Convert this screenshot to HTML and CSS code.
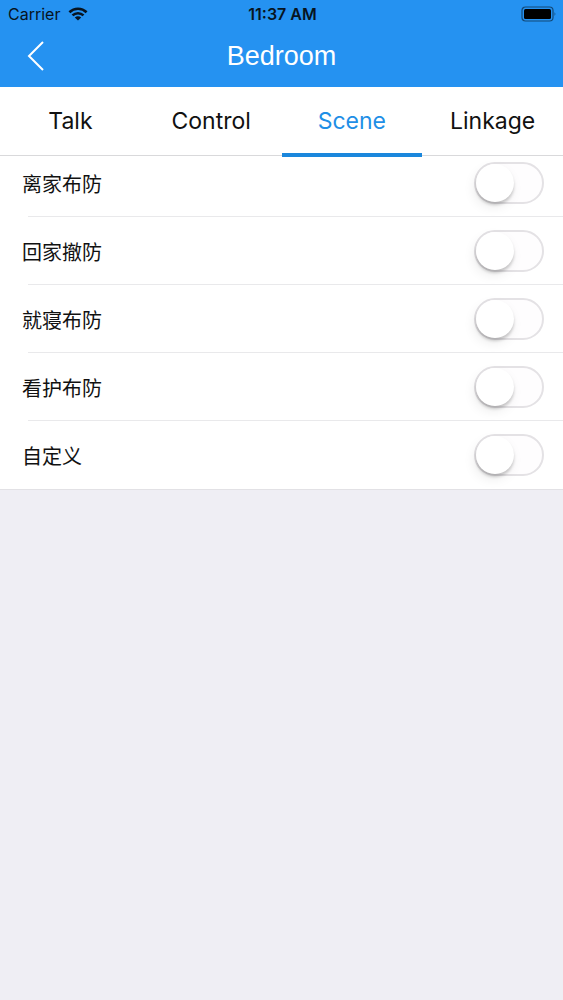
FILE: index.html
```
<!DOCTYPE html>
<html lang="zh-CN">
<head>
<meta charset="utf-8">
<meta name="viewport" content="width=device-width, initial-scale=1">
<title>Bedroom</title>
<link rel="stylesheet" href="styles.css">
</head>
<body>
<header class="header">
  <div class="status">
    <div class="carrier">
      <span>Carrier</span>
      <svg class="wifi" viewBox="0 0 20 14" aria-hidden="true">
        <path d="M1.4 5.2a12.4 12.4 0 0 1 17.2 0M4.5 8.4a8 8 0 0 1 11 0" fill="none" stroke="currentColor" stroke-width="2.6"/>
        <path d="M10 13.6 6.8 10.6a4.8 4.8 0 0 1 6.4 0z" fill="currentColor"/>
      </svg>
    </div>
    <time class="clock">11:37 AM</time>
    <svg class="battery" viewBox="0 0 36 16" aria-hidden="true">
      <rect x="1" y="1" width="31" height="14" rx="3.5" fill="none" stroke="currentColor" stroke-opacity=".5" stroke-width="1.2"/>
      <rect x="3" y="3" width="27" height="10" rx="1.5" fill="currentColor"/>
      <path d="M33.6 6q1.6 2 0 4z" fill="currentColor" fill-opacity=".6"/>
    </svg>
  </div>
  <div class="nav">
    <button class="back" type="button" aria-label="Back">
      <svg class="chevron" viewBox="0 0 18 30" aria-hidden="true"><path d="M16 1 2 15 16 29" fill="none" stroke="currentColor" stroke-width="2"/></svg>
    </button>
    <h1 class="title">Bedroom</h1>
  </div>
</header>
<nav class="tabs">
  <button class="tab" type="button">Talk</button>
  <button class="tab" type="button">Control</button>
  <button class="tab tab-active" type="button" aria-current="page">Scene</button>
  <button class="tab" type="button">Linkage</button>
</nav>
<main class="list">
  <div class="row"><label class="label" for="away">离家布防</label><input class="switch" id="away" type="checkbox" role="switch"></div>
  <div class="row"><label class="label" for="home">回家撤防</label><input class="switch" id="home" type="checkbox" role="switch"></div>
  <div class="row"><label class="label" for="sleep">就寝布防</label><input class="switch" id="sleep" type="checkbox" role="switch"></div>
  <div class="row"><label class="label" for="care">看护布防</label><input class="switch" id="care" type="checkbox" role="switch"></div>
  <div class="row"><label class="label" for="custom">自定义</label><input class="switch" id="custom" type="checkbox" role="switch"></div>
</main>
</body>
</html>
```
FILE: styles.css
```
* {
  box-sizing: border-box;
}

body {
  margin: 0;
  background: #efeef4;
  color: #111;
  font-family: Inter, "Noto Sans CJK SC", sans-serif;
}

button {
  margin: 0;
  padding: 0;
  border: 0;
  background: none;
  color: inherit;
  font: inherit;
}

.header {
  background: #2592f1;
}

.status {
  display: grid;
  grid-template-columns: 1fr auto 1fr;
  align-items: center;
  height: 28px;
  padding: 0 6px 0 8px;
  color: #071421;
  font-size: 16px;
}

.carrier {
  display: flex;
  align-items: center;
  gap: 8px;
}

.wifi {
  width: 20px;
  height: 14px;
}

.clock {
  font-weight: 600;
}

.battery {
  justify-self: end;
  width: 36px;
  height: 16px;
  color: #000;
}

.nav {
  display: grid;
  grid-template-columns: 1fr auto 1fr;
  align-items: center;
  height: 59px;
  padding-bottom: 4px;
  color: #fff;
}

.back {
  display: flex;
  justify-self: start;
  padding: 0 27px;
}

.chevron {
  width: 18px;
  height: 30px;
}

.title {
  margin: 0;
  font: 400 27px/32px "Liberation Sans", sans-serif;
}

.tabs {
  position: relative;
  display: grid;
  grid-template-columns: repeat(4, 1fr);
  height: 69px;
  border-bottom: 1px solid #d9d9db;
  background: #fff;
}

.tab {
  position: relative;
  font-size: 23px;
}

.tab-active {
  color: #1f8fe6;
}

.tab-active::after {
  content: "";
  position: absolute;
  right: 0;
  bottom: -2px;
  left: 0;
  height: 4px;
  background: #1b87dc;
}

.list {
  margin-top: -7px;
  border-bottom: 1px solid #e2e1e5;
  background: #fff;
}

.row {
  display: flex;
  align-items: center;
  justify-content: space-between;
  height: 68px;
  padding: 0 19px 0 22px;
  background: linear-gradient(#e9e9eb, #e9e9eb) 28px 100% / 100% 1px no-repeat;
}

.row:last-child {
  background: none;
}

.label {
  padding-top: 3px;
  font-size: 20px;
  line-height: 30px;
}

.switch {
  position: relative;
  appearance: none;
  width: 70px;
  height: 42px;
  margin: 0;
  border: 2px solid #e4e2e5;
  border-radius: 21px;
  background: #fefdfe;
}

.switch::before {
  content: "";
  position: absolute;
  top: 0;
  left: 0;
  width: 38px;
  height: 38px;
  border-radius: 50%;
  background: #fff;
  box-shadow: 0 3px 3px #0000002e, -2px 5px 12px #00000014;
}

.switch:checked {
  background: #2592f1;
}

.switch:checked::before {
  left: 28px;
}
```
